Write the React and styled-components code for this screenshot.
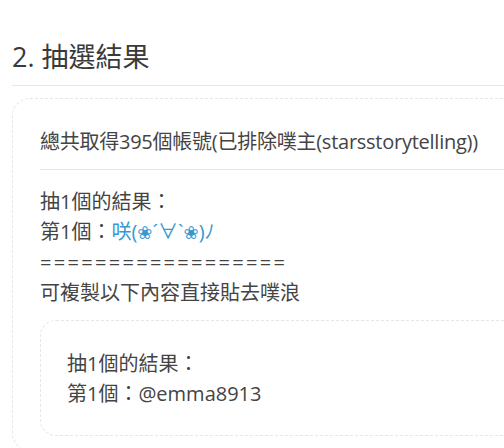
import React from "react";
import styled, { createGlobalStyle } from "styled-components";

const Global = createGlobalStyle`
  html, body {
    margin: 0;
    padding: 0;
    background: #ffffff;
    overflow: hidden;
  }
  body {
    font-family: "Open Sans", "Noto Sans CJK TC", sans-serif;
    font-weight: 400;
    color: #444;
  }
`;

const Page = styled.div`
  width: 760px;
  padding: 40px 0 0 12px;
  box-sizing: border-box;
`;

const Title = styled.h2`
  margin: 0;
  font-size: 27px;
  font-weight: 400;
  line-height: 34px;
  padding-bottom: 11px;
  border-bottom: 1px solid #e6e6e6;
  color: #3a3a3a;
  font-family: "Open Sans", "Noto Sans CJK TC", sans-serif;
`;

const Card = styled.section`
  margin-top: 12px;
  border: 1px dashed #e6e6e6;
  border-radius: 18px;
  padding: 28px 28px 14px 27px;
  font-size: 20px;
  line-height: 30px;
`;

const CardHeader = styled.div`
  padding-bottom: 12px;
  border-bottom: 1px solid #e6e6e6;
  letter-spacing: -0.25px;
`;

const CardBody = styled.div`
  padding-top: 17px;
`;

const Line = styled.div`
  white-space: nowrap;
`;

const Separator = styled(Line)`
  letter-spacing: 2.3px;
`;

const Highlight = styled.span`
  color: #3598d0;
`;

const Flower = styled.span`
  font-family: "DejaVu Sans", sans-serif;
  font-size: 18px;
`;

const CopyBox = styled.div`
  margin-top: 12px;
  border: 1px dashed #e6e6e6;
  border-radius: 16px;
  padding: 28px 28px 26px 26px;
`;

export default function App() {
  return (
    <>
      <Global />
      <Page>
        <Title>2. 抽選結果</Title>
        <Card>
          <CardHeader>總共取得395個帳號(已排除噗主(starsstorytelling))</CardHeader>
          <CardBody>
            <Line>抽1個的結果：</Line>
            <Line>
              第1個：
              <Highlight>
                咲(<Flower>❀</Flower>´∀`<Flower>❀</Flower>)ﾉ
              </Highlight>
            </Line>
            <Separator>==================</Separator>
            <Line>可複製以下內容直接貼去噗浪</Line>
            <CopyBox>
              <Line>抽1個的結果：</Line>
              <Line>第1個：@emma8913</Line>
            </CopyBox>
          </CardBody>
        </Card>
      </Page>
    </>
  );
}
